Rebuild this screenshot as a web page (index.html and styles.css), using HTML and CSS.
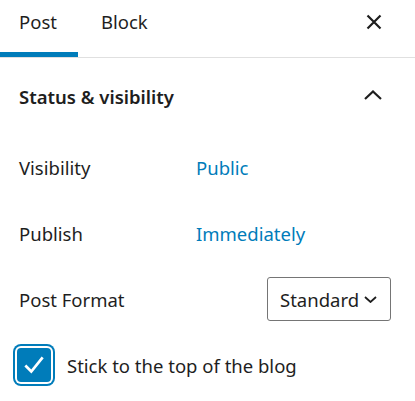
FILE: index.html
```html
<!DOCTYPE html>
<html>
<head>
<meta charset="utf-8">
<link rel="stylesheet" href="styles.css">
</head>
<body>
<div class="sidebar">
  <div class="tabs">
    <div class="tab active">Post</div>
    <div class="tab second">Block</div>
    <button class="close" aria-label="Close">
      <svg width="16" height="16" viewBox="0 0 16 16"><path d="M1.5 1.5L14.5 14.5M14.5 1.5L1.5 14.5" stroke="#1e1e1e" stroke-width="2.2" fill="none"/></svg>
    </button>
  </div>
  <div class="panel">
    <div class="panel-title">
      <span>Status &amp; visibility</span>
      <svg class="chev" width="18" height="10" viewBox="0 0 18 10"><path d="M1 9L9 1.5L17 9" stroke="#1e1e1e" stroke-width="2.2" fill="none"/></svg>
    </div>
    <div class="row">
      <span class="label">Visibility</span>
      <span class="value">Public</span>
    </div>
    <div class="row">
      <span class="label">Publish</span>
      <span class="value">Immediately</span>
    </div>
    <div class="row">
      <span class="label">Post Format</span>
      <div class="select">
        <span>Standard</span>
        <svg width="13" height="7" viewBox="0 0 13 7"><path d="M1 1L6.5 6L12 1" stroke="#1e1e1e" stroke-width="1.8" fill="none"/></svg>
      </div>
    </div>
    <div class="row check-row">
      <span class="checkbox">
        <svg width="26" height="26" viewBox="0 0 24 24"><path d="M4 12.5L9.5 18L20 5" stroke="#fff" stroke-width="2.5" fill="none"/></svg>
      </span>
      <span class="check-label">Stick to the top of the blog</span>
    </div>
  </div>
</div>
</body>
</html>
```
FILE: styles.css
```css
* { box-sizing: border-box; }
html, body { margin: 0; padding: 0; background: #fff; }
body {
  font-family: "Noto Sans", "Open Sans", sans-serif;
  font-size: 18.5px;
  color: #1e1e1e;
  width: 415px;
  height: 401px;
  overflow: hidden;
}
.sidebar { width: 415px; }
.tabs {
  display: flex;
  align-items: stretch;
  height: 58px;
  border-bottom: 1px solid #e0e0e0;
}
.tab {
  padding: 6px 19px 16px;
  display: flex;
  align-items: center;
  border-bottom: 5px solid transparent;
}
.tab.active { border-bottom-color: #007cba; width: 78px; }
.tab.second { padding-left: 23px; }
.close {
  margin-left: auto;
  margin-right: 33px;
  background: none;
  border: 0;
  padding: 0;
  display: flex;
  align-items: center;
  margin-top: -14px;
}
.panel-title {
  height: 76px;
  display: flex;
  align-items: center;
  justify-content: space-between;
  padding: 0 33px 0 19px;
  font-weight: 600;
}
.chev { margin-top: -2px; }
.row {
  height: 66px;
  display: flex;
  align-items: center;
  padding: 0 24px 0 19px;
}
.label { width: 177px; }
.value { color: #007cba; }
.select {
  margin-left: auto;
  width: 124px;
  height: 44px;
  border: 1px solid #757575;
  border-radius: 3px;
  display: flex;
  align-items: center;
  padding: 0 13px 0 12px;
  justify-content: space-between;
}
.check-row { padding-left: 17px; }
.checkbox {
  width: 34px;
  height: 34px;
  background: #007cba;
  border-radius: 4px;
  box-shadow: 0 0 0 2px #fff, 0 0 0 4px #007cba;
  display: flex;
  align-items: center;
  justify-content: center;
  margin-right: 16px;
}
```
